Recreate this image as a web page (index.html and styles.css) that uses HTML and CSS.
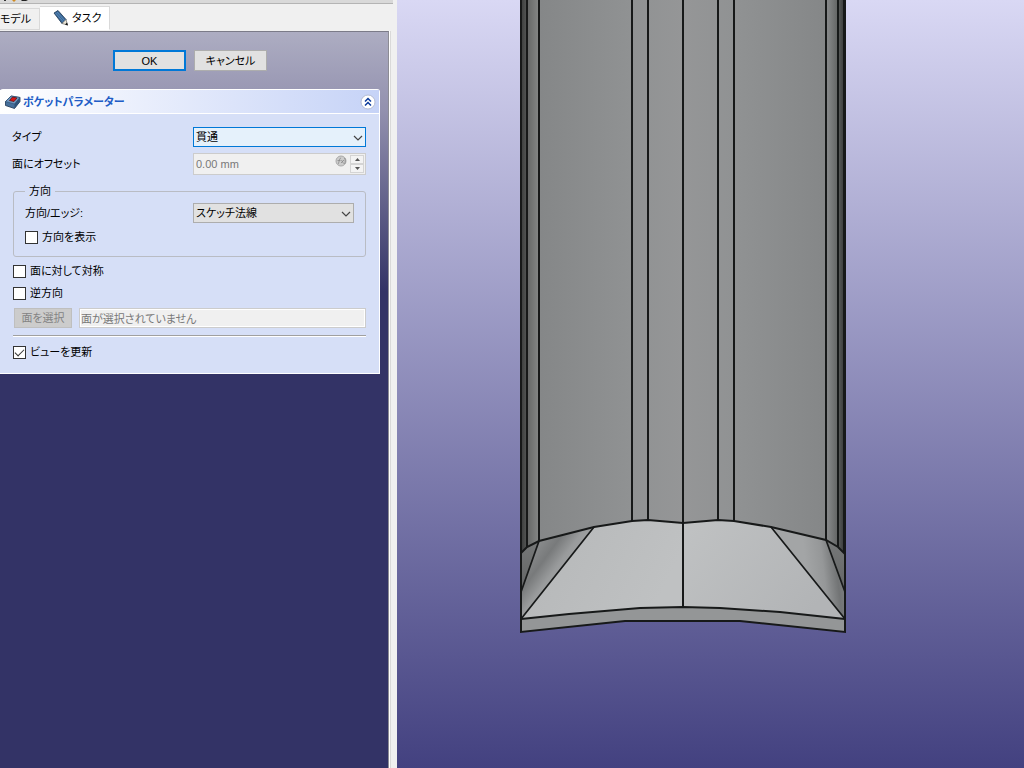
FILE: index.html
```html
<!DOCTYPE html>
<html lang="ja">
<head>
<meta charset="utf-8">
<title>タスク</title>
<link rel="stylesheet" href="styles.css">
</head>
<body>
<div class="app">
  <aside class="dock">
    <div class="dock-title">
      <svg width="40" height="3" viewBox="0 0 40 3" aria-hidden="true"><path d="M4 0h2v1H4z" fill="#333"/><path d="M12 0h4l-2 2z" fill="#d08a20"/><path d="M21 0h7l-2 1h-4z" fill="#222"/></svg>
    </div>
    <div class="tabs" role="tablist">
      <button class="tab tab-model" role="tab" aria-selected="false">モデル</button>
      <button class="tab tab-active" role="tab" aria-selected="true">
        <svg width="16" height="16" viewBox="0 0 16 16" aria-hidden="true"><path d="M1 3 5 .5l8 9-4 4z" fill="#3a6797" stroke="#1c3550" stroke-width=".8"/><path d="M2.500 3l8 9M4 2l8 9" stroke="#5f8fbd" stroke-width=".8"/><path d="M9 13.500l4-4 1.500 5.500z" fill="#eee8d8" stroke="#555" stroke-width=".6"/><path d="M12 14.500l2-2 1 3z" fill="#111"/></svg>
        タスク
      </button>
    </div>
    <div class="pane">
      <div class="actions">
        <button class="btn btn-default">OK</button>
        <button class="btn">キャンセル</button>
      </div>
      <section class="panel">
        <header class="panel-head">
          <svg width="16" height="16" viewBox="0 0 16 16" aria-hidden="true"><path d="M.5 7.500 6 2l9 1.500v4L9.500 14.500l-9-3z" fill="#466f9b" stroke="#1c3450" stroke-width=".8"/><path d="M.5 7.500l9 2.500L15 3.500 6 2z" fill="#6f98c0" stroke="#2c4d70" stroke-width=".6"/><path d="M9.500 10v4.500L15 7.500v-4z" fill="#2f5379"/><path d="M4.500 6.500l3-3.500 4.500 1-3 3.500z" fill="#d81414" stroke="#5a1616" stroke-width=".8"/></svg>
          <h2>ポケットパラメーター</h2>
          <button class="collapse" aria-label="折りたたむ">
            <svg width="16" height="16" viewBox="0 0 16 16" aria-hidden="true"><circle cx="8" cy="8" r="7" fill="#fff" stroke="#b4bcd4"/><path d="M5 7.500l3-3 3 3M5 11.500l3-3 3 3" fill="none" stroke="#0a3a9c" stroke-width="1.500"/></svg>
          </button>
        </header>
        <form class="panel-body">
          <div class="row">
            <label for="type">タイプ</label>
            <span class="combo combo-focus"><select id="type"><option>貫通</option></select><svg width="10" height="6" viewBox="0 0 10 6" aria-hidden="true"><path d="M1 1l4 4 4-4"/></svg></span>
          </div>
          <div class="row row-offset">
            <label for="offset">面にオフセット</label>
            <span class="spin">
              <input id="offset" type="text" value="0.00 mm" disabled>
              <svg class="fx" width="12" height="12" viewBox="0 0 12 12" aria-hidden="true"><circle cx="6" cy="6" r="5" fill="#ccc" stroke="#aaa"/><path d="M3 9c1 0 1-6 3-6M2.500 5.500h3M6 8l3-3M6.500 5l2 3.500M9.500 3c1 2 1 4 0 6" fill="none" stroke="#888" stroke-width=".8"/></svg>
              <span class="steps">
                <button type="button" disabled aria-label="増やす"><svg width="5" height="3" viewBox="0 0 5 3"><path d="M0 3l2.500-3L5 3z"/></svg></button>
                <button type="button" disabled aria-label="減らす"><svg width="5" height="3" viewBox="0 0 5 3"><path d="M0 0l2.500 3L5 0z"/></svg></button>
              </span>
            </span>
          </div>
          <fieldset class="group">
            <legend>方向</legend>
            <div class="row">
              <label for="edge">方向/エッジ:</label>
              <span class="combo"><select id="edge"><option>スケッチ法線</option></select><svg width="10" height="6" viewBox="0 0 10 6" aria-hidden="true"><path d="M1 1l4 4 4-4"/></svg></span>
            </div>
            <label class="check"><input type="checkbox">方向を表示</label>
          </fieldset>
          <div class="checks">
            <label class="check"><input type="checkbox">面に対して対称</label>
            <label class="check"><input type="checkbox">逆方向</label>
          </div>
          <div class="face">
            <button type="button" class="face-btn" disabled>面を選択</button>
            <input class="face-name" type="text" value="面が選択されていません" aria-label="面" disabled>
          </div>
          <hr>
          <label class="check"><input type="checkbox" checked>ビューを更新</label>
        </form>
      </section>
    </div>
  </aside>
  <main class="view">
    <svg viewBox="397 0 627 768" preserveAspectRatio="xMidYMin slice" role="img" aria-label="3Dモデル">
      <defs>
        <linearGradient id="body" gradientUnits="userSpaceOnUse" x1="521" y1="0" x2="846" y2="0">
          <stop offset="0" stop-color="#3b3d3c"/><stop offset=".018" stop-color="#555756"/><stop offset=".02" stop-color="#666867"/><stop offset=".055" stop-color="#858786"/><stop offset=".06" stop-color="#858788"/><stop offset=".34" stop-color="#909293"/><stop offset=".5" stop-color="#959697"/><stop offset=".66" stop-color="#909293"/><stop offset=".935" stop-color="#858788"/><stop offset=".945" stop-color="#848687"/><stop offset=".975" stop-color="#626463"/><stop offset=".98" stop-color="#525453"/><stop offset="1" stop-color="#303231"/>
        </linearGradient>
        <linearGradient id="faceL" x1="0" y1="0" x2="1" y2=".3"><stop offset="0" stop-color="#b5b7b8"/><stop offset="1" stop-color="#bfc1c2"/></linearGradient>
        <linearGradient id="faceR" x1="0" y1="0" x2="1" y2=".5"><stop offset="0" stop-color="#c0c2c3"/><stop offset="1" stop-color="#b2b4b6"/></linearGradient>
        <linearGradient id="sideL" gradientUnits="userSpaceOnUse" x1="527" y1="555" x2="565" y2="583"><stop offset="0" stop-color="#8c8e8f"/><stop offset=".35" stop-color="#787a7b"/><stop offset=".65" stop-color="#999b9c"/><stop offset="1" stop-color="#a4a6a7"/></linearGradient>
        <linearGradient id="sideR" gradientUnits="userSpaceOnUse" x1="805" y1="560" x2="848" y2="555"><stop offset="0" stop-color="#a3a5a6"/><stop offset=".4" stop-color="#959798"/><stop offset=".7" stop-color="#727475"/><stop offset="1" stop-color="#858788"/></linearGradient>
        <linearGradient id="tip" x1="0" y1="0" x2="0" y2="1"><stop offset="0" stop-color="#777979"/><stop offset="1" stop-color="#626465"/></linearGradient>
      </defs>
      <path fill="url(#body)" d="M521 0H846V560L683 530 521 560z"/>
      <path fill="url(#faceL)" d="M594 527L632 521 648 520 683 523V607L640 608 569 614 521 619z"/>
      <path fill="url(#faceR)" d="M683 523L718 520 734 521 771 527 845 619 780 612 720 608 683 607z"/>
      <path fill="url(#sideL)" d="M539 541L594 527 521 619V590z"/>
      <path fill="url(#sideR)" d="M771 527L826 540 845 590V619z"/>
      <path fill="url(#tip)" d="M521 553L527 547 539 541 521 592zM845 553L838 547 826 540 845 592z"/>
      <path fill="#949697" d="M521 619L569 614 640 608 683 607 720 608 780 612 845 619V632L740 621H625L521 632z"/>
      <g fill="none" stroke="#171919" stroke-width="2">
        <path d="M521 0V632L625 621H740L845 632V0M527 0V547M539 0V541M632 0V521M648 0V520M683 0V607M718 0V520M734 0V521M826 0V540M838 0V547M844 0V553"/>
        <path d="M521 553L527 547 539 541 594 527 632 521 648 520 683 523 718 520 734 521 771 527 826 540 838 547 845 554"/>
        <path d="M521 619L569 614 640 608 683 607 720 608 780 612 845 619"/>
        <path stroke-width="1.700" d="M539 541L521 592M594 527L521 619M771 527L845 619M826 540L845 592"/>
      </g>
    </svg>
  </main>
</div>
</body>
</html>
```
FILE: styles.css
```css
* { box-sizing: border-box; }
body { margin: 0; }
body, button, input, select {
  font-family: "Liberation Sans", "Noto Sans CJK JP", sans-serif;
  font-size: 11px;
  line-height: 16px;
  color: #000;
  font-feature-settings: "palt";
}
button, input, select { margin: 0; padding: 0; border-radius: 0; }

.app { display: flex; min-height: 100vh; }
.dock {
  flex: 0 0 397px;
  min-width: 0;
  display: flex;
  flex-direction: column;
  background: #f0f0f0;
  padding-right: 6px;
}
.dock-title {
  height: 4px;
  background: #d9d9d9;
  border-bottom: 1px solid #b4b4b4;
  display: flex;
  margin-right: -2px;
}
.tabs { display: flex; align-items: flex-end; height: 27px; padding: 2px 0 1px; }
.tab { border: 1px solid #d9d9d9; border-left: 0; background: #f0f0f0; height: 22px; }
.tab-model { width: 40px; padding-right: 12px; white-space: nowrap; }
.tab-active {
  display: flex;
  align-items: center;
  gap: 3px;
  width: 70px;
  height: 24px;
  padding-left: 13px;
  background: #fff;
  border-bottom-color: #fff;
}
.pane {
  flex: 1;
  border-top: 1px solid #7b7b88;
  border-right: 1px solid #8c8c94;
  box-shadow: 1px 0 #fff, 2px 0 #d9d9d9;
  margin-right: 2px;
  background: #333366 linear-gradient(#adadc2, #9290ae 80px, #333366 260px) no-repeat;
}
.actions { display: flex; justify-content: center; gap: 8px; padding: 18px 8px 18px 0; }
.btn { width: 73px; height: 21px; background: #e1e1e1; border: 1px solid #adadad; }
.btn-default { border: 2px solid #0078d7; }

.panel {
  margin-right: 8px;
  background: #d6dff7;
  border: 1px solid #fff;
  border-left: 0;
  border-radius: 3px 3px 0 0;
}
.panel-head {
  display: flex;
  align-items: center;
  gap: 2px;
  height: 24px;
  padding: 0 3px 0 5px;
  border-bottom: 1px solid #fff;
  background: linear-gradient(90deg, #fff, #c6d3f7);
}
.panel-head h2 { flex: 1; margin: 0; font-size: 11px; line-height: 16px; color: #215dc6; }
.collapse { border: 0; background: none; width: 16px; height: 16px; }
.collapse svg { display: block; }
.panel-body { padding: 13px 13px 13px 12px; }

.row { display: grid; grid-template-columns: 181px minmax(0, 1fr); align-items: center; height: 20px; }
.row-offset { height: 22px; margin-top: 6px; }
.combo { position: relative; display: block; }
.combo select {
  display: block;
  width: 100%;
  height: 20px;
  padding: 0 20px 0 2px;
  border: 1px solid #adadad;
  background: #e1e1e1;
  appearance: none;
}
.combo-focus select { background: #e5f1fb; border-color: #0078d7; }
.combo svg { position: absolute; right: 3px; top: 8px; fill: none; stroke: #444; stroke-width: 1.2; pointer-events: none; }
.spin { display: flex; height: 22px; padding: 1px; border: 1px solid #ccc; background: #f0f0f0; }
.spin input { flex: 1; width: 0; min-width: 0; border: 0; padding-left: 1px; background: none; color: #787878; }
.fx { margin-right: 3px; }
.steps { display: flex; flex-direction: column; width: 14px; }
.steps button { flex: 1; display: flex; align-items: center; justify-content: center; min-height: 0; border: 1px solid #d4d4d4; background: #f3f3f3; }
.steps path { fill: #555; }

.group {
  margin: 8px 0 0 1px;
  padding: 4px 11px 11px 11px;
  min-width: 0;
  border: 1px solid #b9bcc4;
  border-radius: 3px;
}
.group legend { padding: 0 4px; }
.group .row { grid-template-columns: 168px minmax(0, 1fr); }
.group .check { margin-top: 6px; }

.check { display: flex; align-items: center; gap: 4px; height: 16px; }
.check input { appearance: none; width: 13px; height: 13px; border: 1px solid #333; background: #fff; }
.check input:checked::before {
  content: "";
  display: block;
  width: 8px;
  height: 4px;
  margin: 2px 0 0 1px;
  border: solid #333;
  border-width: 0 0 1px 1px;
  transform: rotate(-45deg);
}
.panel-body > .check, .checks { margin-left: 1px; }
.checks { display: grid; gap: 6px; margin-top: 6px; }
.face { display: flex; gap: 7px; margin: 7px 0 7px 2px; }
.face-btn { width: 58px; height: 20px; border: 1px solid #bfbfbf; background: #ccc; color: #838383; }
.face-name { flex: 1; min-width: 0; height: 20px; padding-left: 1px; border: 1px solid #ccc; background: #f0f0f0; box-shadow: inset 0 0 0 1px #fff; color: #787878; }
hr { height: 2px; margin: 0 0 7px 1px; border: 0; border-top: 1px solid #a0a0a0; border-bottom: 1px solid #fff; }

.view { flex: 1; min-width: 0; position: relative; background: linear-gradient(#d9d8f4, #434180); }
.view svg { position: absolute; inset: 0; width: 100%; height: 100%; display: block; }
```
